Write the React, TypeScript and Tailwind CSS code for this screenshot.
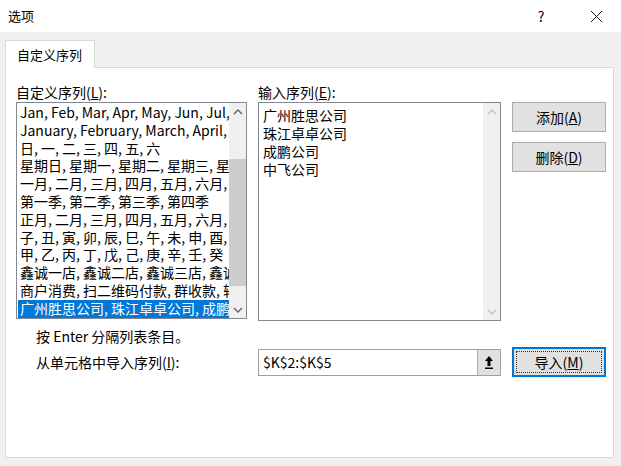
import React from 'react'

const font = { fontFamily: '"Noto Sans CJK SC", "Noto Sans", sans-serif' }

const seriesList = [
  'Jan, Feb, Mar, Apr, May, Jun, Jul, Aug',
  'January, February, March, April, May',
  '日, 一, 二, 三, 四, 五, 六',
  '星期日, 星期一, 星期二, 星期三, 星期四',
  '一月, 二月, 三月, 四月, 五月, 六月, 七月',
  '第一季, 第二季, 第三季, 第四季',
  '正月, 二月, 三月, 四月, 五月, 六月, 七月',
  '子, 丑, 寅, 卯, 辰, 巳, 午, 未, 申, 酉, 戌',
  '甲, 乙, 丙, 丁, 戊, 己, 庚, 辛, 壬, 癸',
  '鑫诚一店, 鑫诚二店, 鑫诚三店, 鑫诚四店',
  '商户消费, 扫二维码付款, 群收款, 转账',
  '广州胜思公司, 珠江卓卓公司, 成鹏公司',
]

const entries = ['广州胜思公司', '珠江卓卓公司', '成鹏公司', '中飞公司']

const Chevron = ({ up, color }: { up?: boolean; color: string }) => (
  <svg width="10" height="6" viewBox="0 0 10 6">
    <path d={up ? 'M1 5 L5 1 L9 5' : 'M1 1 L5 5 L9 1'} fill="none" stroke={color} strokeWidth="1.3" />
  </svg>
)

const Button = ({ label, hot }: { label: string; hot: string }) => (
  <button className="w-[94px] h-[30px] bg-[#e1e1e1] border border-[#adadad] text-[14px] text-black flex items-center justify-center">
    {label}(<span className="underline">{hot}</span>)
  </button>
)

const App = () => {
  return (
    <div className="w-[621px] h-[466px] bg-[#f0f0f0] flex flex-col text-black" style={font}>
      {/* title bar */}
      <div className="h-[32px] bg-white flex items-center pl-[8px] pr-[18px] text-[13px]">
        <span className="flex-1">选项</span>
        <span className="w-[10px] text-center mr-[44px] text-[14px]">?</span>
        <svg width="13" height="13" viewBox="0 0 13 13">
          <path d="M1 1 L12 12 M12 1 L1 12" stroke="#111" strokeWidth="1" />
        </svg>
      </div>

      <div className="flex-1 flex flex-col pl-[5px] pr-[7px] pt-[8px] pb-[8px]">
        {/* tab */}
        <div className="flex">
          <div className="w-[90px] h-[28px] bg-white border border-b-0 border-[#d9d9d9] flex items-center pl-[11px] text-[13px] -mb-px relative z-10">
            自定义序列
          </div>
        </div>

        {/* panel */}
        <div className="flex-1 bg-white border border-[#d9d9d9] pl-[10px] pt-[15px] flex flex-col">
          <div className="flex">
            {/* left list */}
            <div className="w-[231px] flex flex-col">
              <div className="text-[14px] leading-[18px] h-[19px]">
                自定义序列(<span className="underline">L</span>):
              </div>
              <div className="h-[217px] border border-[#828790] flex overflow-hidden">
                <div className="flex-1 min-w-0 pt-[1px] pl-[1px] overflow-hidden">
                  {seriesList.map((s, i) => (
                    <div
                      key={i}
                      className={
                        'h-[17.8px] leading-[17.8px] text-[14px] pl-[2px] whitespace-nowrap overflow-hidden ' +
                        (i === seriesList.length - 1 ? 'bg-[#0078d7] text-white' : '')
                      }
                    >
                      {s}
                    </div>
                  ))}
                </div>
                <div className="w-[17px] shrink-0 bg-[#f0f0f0] flex flex-col items-center">
                  <div className="h-[17px] flex items-center justify-center">
                    <Chevron up color="#606060" />
                  </div>
                  <div className="flex-1 w-full pt-[39px] pb-[15px]">
                    <div className="h-full w-full bg-[#cdcdcd]" />
                  </div>
                  <div className="h-[17px] flex items-center justify-center">
                    <Chevron color="#606060" />
                  </div>
                </div>
              </div>
            </div>

            {/* right list */}
            <div className="w-[243px] ml-[11px] flex flex-col">
              <div className="text-[14px] leading-[18px] h-[19px]">
                输入序列(<span className="underline">E</span>):
              </div>
              <div className="h-[219px] border border-[#828790] flex">
                <div className="flex-1 pt-[3px] pl-[4px]">
                  {entries.map(e => (
                    <div key={e} className="h-[18px] leading-[18px] text-[14px]">
                      {e}
                    </div>
                  ))}
                </div>
                <div className="w-[17px] bg-[#f0f0f0] flex flex-col justify-between">
                  <div className="h-[17px] flex items-center justify-center">
                    <Chevron up color="#c0c0c0" />
                  </div>
                  <div className="h-[17px] flex items-center justify-center">
                    <Chevron color="#c0c0c0" />
                  </div>
                </div>
              </div>
            </div>

            {/* buttons */}
            <div className="ml-[11px] pt-[19px] flex flex-col gap-[10px]">
              <Button label="添加" hot="A" />
              <Button label="删除" hot="D" />
            </div>
          </div>

          <div className="pl-[20px] mt-[6px] text-[14px] leading-[18px]">按 Enter 分隔列表条目。</div>

          <div className="flex items-center mt-[2px]">
            <div className="w-[242px] pl-[20px] text-[14px]">
              从单元格中导入序列(<span className="underline">I</span>):
            </div>
            <div className="w-[243px] h-[27px] border border-[#a0a0a0] flex items-center">
              <span className="flex-1 pl-[4px] text-[14px]">$K$2:$K$5</span>
              <div className="w-[23px] h-full bg-[#e1e1e1] border-l border-[#adadad] flex items-center justify-center">
                <svg width="10" height="15" viewBox="0 0 10 15">
                  <path d="M5 1 L9 6 L6.5 6 L6.5 11 L3.5 11 L3.5 6 L1 6 Z" fill="#000" />
                  <rect x="1" y="12.5" width="8" height="1.5" fill="#000" />
                </svg>
              </div>
            </div>
            <div className="ml-[11px] w-[94px] h-[30px] border-2 border-[#0078d7] bg-[#e1e1e1] p-[2px]">
              <div className="w-full h-full border border-dotted border-[#333] flex items-center justify-center text-[14px]">
                导入(<span className="underline">M</span>)
              </div>
            </div>
          </div>
        </div>
      </div>
    </div>
  )
}

export default App
